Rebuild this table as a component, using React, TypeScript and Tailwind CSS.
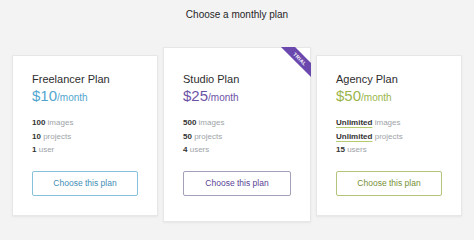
import React from 'react';

type Plan = {
  name: string;
  price: string;
  features: { strong: string; rest: string; underline?: boolean }[];
  priceColor: string;
  btnClass: string;
  featured?: boolean;
};

const plans: Plan[] = [
  {
    name: 'Freelancer Plan',
    price: '$10',
    features: [
      { strong: '100', rest: 'images' },
      { strong: '10', rest: 'projects' },
      { strong: '1', rest: 'user' },
    ],
    priceColor: 'text-[#52a6d0]',
    btnClass: 'border-[#86c0db] text-[#3f8db5]',
  },
  {
    name: 'Studio Plan',
    price: '$25',
    features: [
      { strong: '500', rest: 'images' },
      { strong: '50', rest: 'projects' },
      { strong: '4', rest: 'users' },
    ],
    priceColor: 'text-[#6d52a6]',
    btnClass: 'border-[#a69fb8] text-[#5a3f94]',
    featured: true,
  },
  {
    name: 'Agency Plan',
    price: '$50',
    features: [
      { strong: 'Unlimited', rest: 'images', underline: true },
      { strong: 'Unlimited', rest: 'projects', underline: true },
      { strong: '15', rest: 'users' },
    ],
    priceColor: 'text-[#9bb54c]',
    btnClass: 'border-[#b3c47c] text-[#778f36]',
  },
];

function PlanCard({ plan }: { plan: Plan }) {
  return (
    <div
      className={`relative bg-white border border-[#e7e7e9] shadow-[0_1px_2px_rgba(0,0,0,0.06)] px-[19px] ${
        plan.featured ? 'w-[148px] pt-[24px] pb-[25px]' : 'w-[146px] mt-[8px] pt-[16px] pb-[19px]'
      }`}
    >
      {plan.featured && (
        <div className="absolute -top-px -right-px w-[32px] h-[32px] overflow-hidden">
          <div className="absolute left-[-2px] top-[7px] w-[46px] h-[10px] rotate-45 bg-[#6a48ad] flex items-center justify-center">
            <span className="text-[5px] leading-none font-bold text-white tracking-[0.3px]">TRIAL</span>
          </div>
        </div>
      )}
      <div className="text-[11px] leading-[14px] text-[#2d2d2d]">{plan.name}</div>
      <div className={`leading-[20px] ${plan.priceColor}`}>
        <span className="text-[15px] font-light">{plan.price}</span>
        <span className="text-[10px]">/month</span>
      </div>
      <div className="mt-[8px] text-[8px] leading-[13.5px]">
        {plan.features.map((f, i) => (
          <div key={i}>
            <span
              className={`font-bold text-[#333] ${
                f.underline ? 'underline decoration-[#b5cb70] decoration-1 underline-offset-2' : ''
              }`}
            >
              {f.strong}
            </span>{' '}
            <span className="text-[#9ea3a8]">{f.rest}</span>
          </div>
        ))}
      </div>
      <button
        className={`mt-[14px] w-full h-[25px] border-[1.5px] rounded-[2px] bg-white text-[8.5px] ${plan.btnClass}`}
      >
        Choose this plan
      </button>
    </div>
  );
}

export default function App() {
  return (
    <div
      className="w-[474px] h-[240px] bg-[#f3f3f4] overflow-hidden"
      style={{ fontFamily: '"Liberation Sans", Arial, sans-serif' }}
    >
      <div className="pt-[9px] text-center text-[10px] leading-[12px] text-[#262626]">
        Choose a monthly plan
      </div>
      <div className="mt-[26px] flex items-start gap-[5px] px-[12px]">
        {plans.map((p) => (
          <PlanCard key={p.name} plan={p} />
        ))}
      </div>
    </div>
  );
}
